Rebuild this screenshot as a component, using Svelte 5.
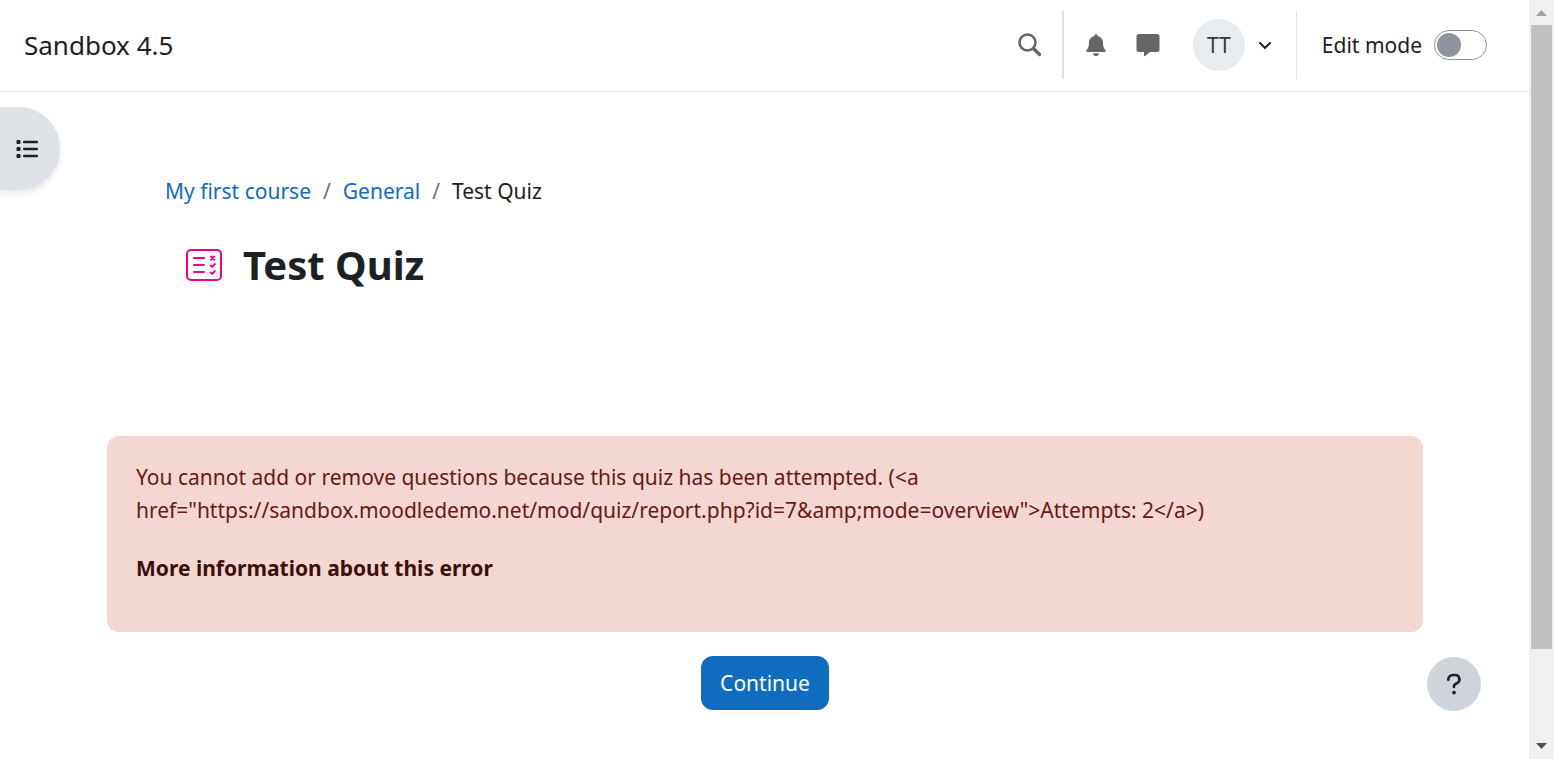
<script>
  let editMode = $state(false);
</script>

<div class="window">
  <div class="page">
    <header>
      <a class="brand" href="#home">Sandbox 4.5</a>
      <div class="tools">
        <button class="icon search" aria-label="Search">
          <svg width="24" height="24" viewBox="0 0 24 24" fill="none" stroke="#666" stroke-linecap="round">
            <circle cx="9.500" cy="9.500" r="8" stroke-width="2.6" />
            <path d="M15.500 15.500l6 6" stroke-width="3.2" />
          </svg>
        </button>
        <span class="rule thick"></span>
        <button class="icon bell" aria-label="Notifications">
          <svg width="20" height="22" viewBox="0 0 20 22" fill="#666">
            <path d="M10 0c.8 0 1.4.6 1.4 1.4v.5c3.300.7 5.600 3.200 5.600 6.600 0 4.200 1 5.900 2.400 7.400.8.800.4 2-.9 2H1.500c-1.300 0-1.700-1.200-.9-2C2 14.400 3 12.700 3 8.500c0-3.400 2.300-5.900 5.600-6.600v-.5C8.600.6 9.200 0 10 0z" />
            <path d="M7.200 19.200h5.600A2.800 2.800 0 0 1 10 22a2.800 2.800 0 0 1-2.800-2.800z" />
          </svg>
        </button>
        <button class="icon chat" aria-label="Messages">
          <svg width="24" height="23" viewBox="0 0 24 23" fill="#666">
            <path d="M3 0h18a2.500 2.500 0 0 1 2.500 2.500v13A2.500 2.500 0 0 1 21 18h-7l-5.300 4.200c-.3.200-.7 0-.7-.4V18H3a2.500 2.500 0 0 1-2.500-2.500v-13A2.500 2.500 0 0 1 3 0z" />
          </svg>
        </button>
        <button class="user" aria-label="User menu">
          <span class="avatar">TT</span>
          <svg width="14" height="9" viewBox="0 0 14 9" fill="none" stroke="#1d2125" stroke-width="2" stroke-linecap="round" stroke-linejoin="round">
            <path d="M2 2l5 5 5-5" />
          </svg>
        </button>
        <span class="rule"></span>
        <label class="edit">
          Edit mode
          <input type="checkbox" role="switch" bind:checked={editMode} />
        </label>
      </div>
    </header>

    <button class="drawer" aria-label="Open course index">
      <svg width="22" height="18" viewBox="0 0 22 18" fill="#1d2125">
        <rect x="0.500" y="0" width="4" height="4" rx="1" />
        <rect x="0.500" y="7" width="4" height="4" rx="1" />
        <rect x="0.500" y="14" width="4" height="4" rx="1" />
        <rect x="7" y="0.800" width="15" height="2.400" rx="1" />
        <rect x="7" y="7.800" width="15" height="2.400" rx="1" />
        <rect x="7" y="14.800" width="15" height="2.400" rx="1" />
      </svg>
    </button>

    <main>
      <div class="heading">
        <nav aria-label="Breadcrumb">
          <a href="#course">My first course</a>
          <span class="slash">/</span>
          <a href="#general">General</a>
          <span class="slash">/</span>
          <span>Test Quiz</span>
        </nav>
        <div class="title">
          <svg width="36" height="32" viewBox="0 0 36 32" fill="none" stroke="#f7007f" stroke-width="2" stroke-linecap="round" stroke-linejoin="round">
            <rect x="1" y="1" width="34" height="30" rx="4" />
            <path d="M8 9h10M8 16h10M8 23h10" />
            <path d="M25 7.500l3.200 3.200M28.200 7.500L25 10.700M24.800 16.500l1.400 1.400 2.600-2.800M24.800 23.500l1.400 1.400 2.600-2.800" />
          </svg>
          <h1>Test Quiz</h1>
        </div>
      </div>

      <div class="alert" role="alert">
        <p>{'You cannot add or remove questions because this quiz has been attempted. (<a href="https://sandbox.moodledemo.net/mod/quiz/report.php?id=7&amp;mode=overview">Attempts: 2</a>)'}</p>
        <p><a href="#error">More information about this error</a></p>
      </div>
      <button class="continue">Continue</button>
    </main>

    <button class="help" aria-label="Show footer">
      <svg width="16" height="22" viewBox="0 0 16 22" fill="none" stroke="#1d2125" stroke-width="2.600" stroke-linecap="round" stroke-linejoin="round">
        <path d="M2.300 6.800V6.500A4.500 4.500 0 0 1 6.800 2h2.400a4.200 4.200 0 0 1 2.200 7.800L9 11.300c-.6.400-1 1-1 1.700v1" />
        <circle cx="8" cy="19.600" r="1.900" fill="#1d2125" stroke="none" />
      </svg>
    </button>
  </div>

  <div class="scroll" aria-hidden="true">
    <svg width="11" height="6" viewBox="0 0 11 6" fill="#a3a3a3"><path d="M0 6L5.500 0 11 6z" /></svg>
    <div class="track"><div class="thumb"></div></div>
    <svg width="11" height="6" viewBox="0 0 11 6" fill="#505050"><path d="M0 0h11L5.500 6z" /></svg>
  </div>
</div>

<style>
  .window {
    display: grid;
    grid-template-columns: minmax(0, 1fr) 25px;
    min-height: 100vh;
    background: #fff;
    color: #1d2125;
    font: 21px/33px "Noto Sans", "Open Sans", sans-serif;
  }
  .window * { box-sizing: border-box; }
  button {
    padding: 0;
    border: 0;
    background: none;
    color: inherit;
    font: inherit;
    cursor: pointer;
  }
  a { color: #0f6cbf; text-decoration: none; }
  svg { display: block; flex: none; }
  .page { position: relative; }
  header {
    display: flex;
    align-items: center;
    justify-content: space-between;
    height: 92px;
    padding: 0 42px 1px 24px;
    border-bottom: 1px solid #dee2e6;
  }
  .brand { color: #1d2125; font-size: 26px; }
  .tools { display: flex; align-items: center; }
  .search { margin-right: 20px; }
  .rule { width: 1px; height: 68px; background: #dee2e6; }
  .thick { width: 2px; }
  .bell { margin: 0 30px 0 22px; }
  .chat { margin-right: 33px; }
  .user { display: flex; align-items: center; gap: 13px; margin-right: 24px; }
  .avatar {
    width: 52px;
    height: 52px;
    border-radius: 50%;
    background: #e9ecef;
    color: #343a40;
    line-height: 52px;
  }
  .edit { display: flex; align-items: center; gap: 12px; margin-left: 25px; }
  .edit input {
    display: flex;
    align-items: center;
    appearance: none;
    width: 53px;
    height: 30px;
    margin: 0;
    padding: 0 2px;
    border: 1px solid #8f959e;
    border-radius: 15px;
    background: #fff;
  }
  .edit input::before {
    content: "";
    width: 24px;
    height: 24px;
    border-radius: 50%;
    background: #8f959e;
  }
  .edit input:checked { justify-content: flex-end; }
  .drawer {
    position: absolute;
    top: 107px;
    left: 0;
    display: flex;
    align-items: center;
    width: 60px;
    height: 83px;
    padding-left: 16px;
    border-radius: 0 42px 42px 0;
    background: #dee2e6;
    box-shadow: 0 3px 6px rgba(0, 0, 0, 0.1);
  }
  main { padding: 83px 106px 48px 107px; }
  .heading { padding-left: 58px; }
  nav { display: flex; gap: 12px; }
  .slash { color: #6a737b; }
  .title {
    display: flex;
    align-items: center;
    gap: 21px;
    margin: 29px 0 143px;
    padding-left: 21px;
  }
  h1 { margin: 0; font-size: 40px; line-height: 56px; font-weight: 700; }
  .alert {
    padding: 25px 29px 22px;
    border-radius: 12px;
    background: #f4d6d2;
    color: #691911;
  }
  .alert p { margin: 0 0 25px; }
  .alert a { color: #3d0f0a; font-weight: 700; }
  .continue {
    display: block;
    height: 54px;
    margin: 24px auto 0;
    padding: 0 19px;
    border-radius: 12px;
    background: #0f6cbf;
    color: #fff;
  }
  .help {
    position: absolute;
    right: 48px;
    bottom: 48px;
    display: grid;
    place-items: center;
    width: 54px;
    height: 54px;
    border-radius: 50%;
    background: #ced4da;
  }
  .scroll {
    display: flex;
    flex-direction: column;
    align-items: center;
    padding: 10px 2px;
    background: #f0f0f0;
  }
  .track { flex: 1; width: 100%; margin: 9px 0; }
  .thumb { height: 88%; background: #c1c1c1; }
</style>
